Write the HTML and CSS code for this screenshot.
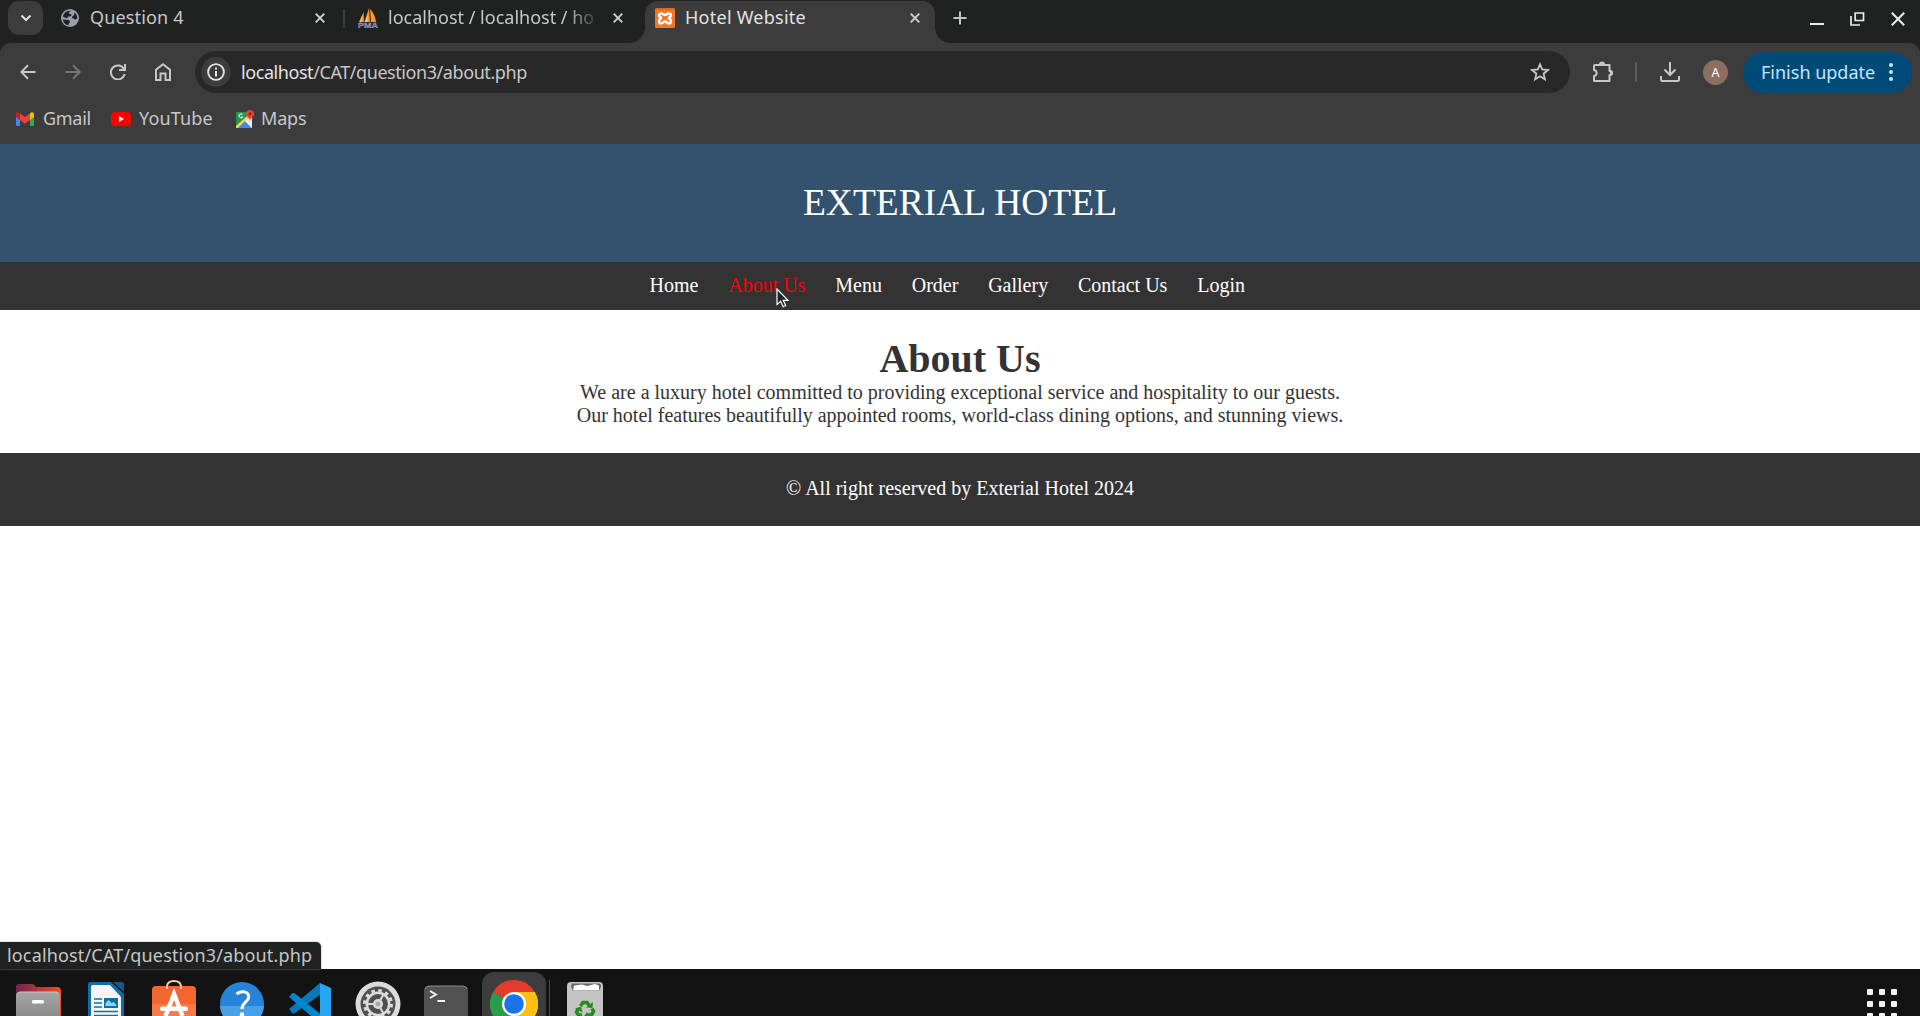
FILE: index.html
```html
<!DOCTYPE html>
<html lang="en">
<head>
<meta charset="utf-8">
<title>Hotel Website</title>
<link rel="stylesheet" href="styles.css">
</head>
<body>
<div class="desktop">
  <div class="tabstrip">
    <div class="tab-search"><svg width="12" height="8" viewBox="0 0 12 8"><path d="M1.500 1.500 6 6l4.500-4.500" fill="none" stroke="#e3e3e3" stroke-width="2"/></svg></div>
    <div class="tab tab-first">
      <svg class="favicon" width="18" height="18" viewBox="0 0 18 18"><circle cx="9" cy="9" r="9" fill="#9aa0ab"/><path d="M10 1.800C8 3 7.500 3.500 8 4.500c.5.800 2.500.2 2.500 1.500S9 7.500 7.500 7.500 7 9.500 6 9.500L1.800 7.500A7.300 7.300 0 0 1 10 1.800z" fill="#202222"/><path d="M1.800 10.500l5 .5c2 0 2.500 1 2 2.500-.3 1-1.300.5-1.300 2v.9A7.500 7.500 0 0 1 1.800 10.500zM16.300 9.500c-1.300 1.300-2.800 1-3.300.5-1-1-2-.5-2-1.700 0-1.300 2.500-.8 2.300-4.800a7.300 7.300 0 0 1 3 6z" fill="#202222"/></svg>
      <span class="title t-question">Question 4</span>
      <svg class="close" width="10" height="10" viewBox="0 0 10 10"><path d="M.7.7l8.600 8.600M9.300.7.7 9.300"/></svg>
    </div>
    <div class="tab-divider"></div>
    <div class="tab tab-second">
      <svg class="favicon" width="20" height="20" viewBox="0 0 20 20"><path d="M5.500 4 1 14h5zM11 0 6.500 14H12zM12 1q5 5 6 13h-5z" fill="#f79a2c"/><path d="M10 6 7 14h2zM4 8l-2 6h1z" fill="#ffd08a"/><text x="0" y="19.500" class="pma" textLength="20" lengthAdjust="spacingAndGlyphs">PMA</text></svg>
      <span class="title t-local">localhost / localhost / ho</span>
      <svg class="close" width="10" height="10" viewBox="0 0 10 10"><path d="M.7.7l8.600 8.600M9.300.7.7 9.300"/></svg>
    </div>
    <div class="tab tab-active">
      <svg class="favicon" width="20" height="20" viewBox="0 0 20 20"><rect width="20" height="20" rx="1.500" fill="#f37623"/><path d="M1 1h18" stroke="#c95a12"/><path d="M7 10C3.500 9.500 3.200 5.500 6 5.500c2 0 2.500 1.500 4 1.500s2-1.500 4-1.500c2.800 0 2.500 4-1 4.500 3.500.5 3.800 5.500 1 5.500-2 0-2.500-2-4-2s-2 2-4 2c-2.800 0-2.500-5 1-5.500z" fill="none" stroke="#fff" stroke-width="2.500"/></svg>
      <span class="title t-hotel">Hotel Website</span>
      <svg class="close bright" width="10" height="10" viewBox="0 0 10 10"><path d="M.7.7l8.600 8.600M9.300.7.7 9.300"/></svg>
    </div>
    <svg class="new-tab" width="14" height="14" viewBox="0 0 14 14"><path d="M7 .5v13M.5 7h13" stroke="#c7c7c7" stroke-width="2"/></svg>
    <div class="window-controls">
      <svg width="14" height="14" viewBox="0 0 14 14"><path d="M0 12h14" stroke="#ececec" stroke-width="2"/></svg>
      <svg width="15" height="14" viewBox="0 0 15 14"><path d="M5.200 1h8.300v7.500H5.200zM1 4v9h9" fill="none" stroke="#ececec" stroke-width="1.700"/></svg>
      <svg width="14" height="14" viewBox="0 0 14 14"><path d="M.8.8l12.400 12.400M13.200.8.8 13.200" stroke="#ececec" stroke-width="2"/></svg>
    </div>
  </div>

  <div class="browser-bars">
    <div class="toolbar">
      <div class="nav-buttons">
        <svg width="16" height="16" viewBox="0 0 16 16"><path d="M15.500 8H1.800M8 1.300 1.300 8 8 14.700"/></svg>
        <svg class="dim" width="16" height="16" viewBox="0 0 16 16"><path d="M.5 8h13.700M8 1.300 14.700 8 8 14.700"/></svg>
        <svg width="16" height="16" viewBox="0 0 16 16"><path d="M14 5A7 7 0 1 0 14.700 10M15 0v6H9"/></svg>
        <svg class="home" width="18" height="18" viewBox="0 0 18 18"><path d="M2 17V6.800L9 1.300l7 5.500V17h-4.500v-6.500h-5V17z"/></svg>
      </div>
      <div class="address">
        <div class="info"><svg width="18" height="18" viewBox="0 0 18 18"><circle cx="9" cy="9" r="7.900" fill="none" stroke="#e3e3e3" stroke-width="1.900"/><path d="M9 4.500v2M9 8v5.500" stroke="#e3e3e3" stroke-width="2"/></svg></div>
        <div class="url"><b>localhost</b>/CAT/question3/about.php</div>
        <svg class="star" width="20" height="20" viewBox="0 0 20 20"><path d="M10 2.200l2.200 5.300 5.700.5-4.300 3.700 1.300 5.600L10 14.300l-4.900 3 1.300-5.600L2.100 8l5.700-.5z" fill="none" stroke="#c7c7c7" stroke-width="1.800"/></svg>
      </div>
      <div class="actions">
        <svg width="22" height="22" viewBox="0 0 22 22"><path d="M3 4h14.500v6c3 0 3 4 0 4v6H2v-5c3.500-.5 3.500-5.500 0-6V5q0-1 1-1z" fill="none" stroke="#c7c7c7" stroke-width="2" stroke-linejoin="round"/><path d="M7 3.500a3 3 0 0 1 6 0zM18 9a3 3 0 0 1 0 6z" fill="#c7c7c7"/></svg>
        <span class="action-divider"></span>
        <svg width="20" height="20" viewBox="0 0 20 20"><path d="M10 0v13M4.500 7.500 10 13l5.500-5.500M1 14v3.500q0 1.500 1.500 1.500h15q1.500 0 1.500-1.500V14" fill="none" stroke="#c7c7c7" stroke-width="2"/></svg>
        <span class="avatar">A</span>
        <div class="update"><span>Finish update</span><svg width="4" height="18" viewBox="0 0 4 18"><g fill="#c2e7ff"><circle cx="2" cy="2" r="2"/><circle cx="2" cy="9" r="2"/><circle cx="2" cy="16" r="2"/></g></svg></div>
      </div>
    </div>
    <div class="bookmarks">
      <div class="bookmark b-gmail"><svg width="18" height="14" viewBox="0 0 18 14"><path d="M0 3h4v11H1.200Q0 14 0 12.800z" fill="#4285f4"/><path d="M14 3h4v9.800q0 1.200-1.200 1.200H14z" fill="#34a853"/><path d="M14 1.200C16 -.5 18 .2 18 2.200V5l-4 3z" fill="#fbbc04"/><path d="M0 2.200C0 .2 2 -.5 4 1.200V8L0 5z" fill="#c5221f"/><path d="M4 1.200l5 3.800 5-3.800V8l-5 3.800L4 8z" fill="#ea4335"/></svg><span>Gmail</span></div>
      <div class="bookmark b-youtube"><svg width="20" height="14" viewBox="0 0 20 14"><rect width="20" height="14" rx="3.500" fill="#f00"/><path d="M8 4v6l5-3z" fill="#fff"/></svg><span>YouTube</span></div>
      <div class="bookmark b-maps"><svg width="18" height="18" viewBox="0 0 18 18"><path d="M0 2h16v16H0z" fill="#e8eaed"/><path d="M0 2h11l2 5-13 11z" fill="#219653"/><path d="M0 16 11 6l2 3L3 18H0z" fill="#ffd23f"/><path d="M2 18l7-7 7 7z" fill="#4285f4"/><path d="M9 11l2-2 5 5v4z" fill="#eee"/><path d="M6.500 4.500A2 2 0 1 0 6.700 7H5" fill="none" stroke="#fff"/><path d="M14 11c0-3-4-4-4-7a4 4 0 0 1 8 0c0 3-4 4-4 7z" fill="#ea4335"/><circle cx="14" cy="4" r="1.400" fill="#8c1b13"/></svg><span>Maps</span></div>
    </div>
  </div>

  <div class="page">
    <header class="site-header">EXTERIAL HOTEL</header>
    <nav class="site-nav"><a>Home</a><a class="hovered">About Us</a><a>Menu</a><a>Order</a><a>Gallery</a><a>Contact Us</a><a>Login</a></nav>
    <main class="about">
      <h1>About Us</h1>
      <p>We are a luxury hotel committed to providing exceptional service and hospitality to our guests.</p>
      <p>Our hotel features beautifully appointed rooms, world-class dining options, and stunning views.</p>
    </main>
    <footer class="site-footer">© All right reserved by Exterial Hotel 2024</footer>
    <div class="status"><span>localhost/CAT/question3/about.php</span></div>
    <svg class="cursor" width="14" height="20" viewBox="0 0 14 20"><path d="M1 1v15.500l3.600-3.300 2.600 5.500 2.500-1.200-2.500-5.200H12z" fill="#222" stroke="#fff" stroke-width="1.200"/></svg>
  </div>

  <div class="dock">
    <div class="app"><svg width="48" height="36" viewBox="0 0 48 36"><defs><linearGradient id="folder"><stop stop-color="#77214f"/><stop offset="1" stop-color="#e95420"/></linearGradient><linearGradient id="steel" x2="0" y2="1"><stop stop-color="#a5a5a5"/><stop offset="1" stop-color="#8b8b8b"/></linearGradient></defs><path d="M2 36V7q0-3 3-3h13q2 0 3 2l1 1h21q4 0 4 4v25z" fill="url(#folder)"/><path d="M2 36V16q0-4 4-4h36q4 0 4 4v20z" fill="url(#steel)"/><path d="M3 14q1-2 3-2h36q2 0 3 2" fill="none" stroke="#c4c4c4"/><rect x="18" y="20" width="12" height="3.500" rx="1.500" fill="#fff"/></svg></div>
    <div class="app"><svg width="48" height="36" viewBox="0 0 48 36"><path d="M6 36V5q0-3 3-3h20l13 12v22z" fill="#0e6fa8"/><path d="M9 36V7q0-2 2-2h17l11 12v19z" fill="#f5f5f5"/><path d="M31 2h8q3 0 3 3v7z" fill="#0d5f91"/><path d="M12 19h8M12 23h8M12 27h8M12 31.500h24M12 35.500h24" stroke="#0e6fa8" stroke-width="1.700"/><path d="M22 18h14v10H22z" fill="#0e6fa8"/><path d="M23.500 26v-3l3-3 3 3 2-1 3 3v1z" fill="#8ed4f2"/></svg></div>
    <div class="app"><svg width="48" height="36" viewBox="0 0 48 36"><path d="M2 36V10q0-4 4-4h36q4 0 4 4v26z" fill="#f4662f"/><path d="M2 24h44v12H2z" fill="#f77b49"/><path d="M17 9V7q0-6 7-6t7 6v2" fill="none" stroke="#f3cda0" stroke-width="2"/><path d="M15.500 36 24 14l8.500 22" fill="none" stroke="#fff" stroke-width="4.500"/><rect x="10" y="26.500" width="28" height="4.500" rx="2.200" fill="#fff"/></svg></div>
    <div class="app"><svg width="48" height="36" viewBox="0 0 48 36"><circle cx="24" cy="24" r="22" fill="#2583da"/><path d="M2 26h44q0 5-3 10H5q-3-5-3-10z" fill="#4aa0e6"/><path d="M18.500 14q3-2.200 6.500-2.200c3.500 0 5.700 2 5.700 5 0 5.200-6.700 5.200-6.700 12.200" fill="none" stroke="#fff" stroke-width="3"/><circle cx="24" cy="34.500" r="2.300" fill="#fff"/></svg></div>
    <div class="app"><svg width="48" height="36" viewBox="0 0 48 36"><path d="M34 3 3 29l3 4q1 1 3 0L35 14z" fill="#0878bd"/><path d="M3 17l3-3.500q1-1 3 0l28 22.500H25z" fill="#0684ce"/><path d="M34 3l11 5v28H34z" fill="#27a7f2"/></svg></div>
    <div class="app"><svg width="48" height="36" viewBox="0 0 48 36"><circle cx="24" cy="24" r="22.500" fill="#dcdcdc"/><circle cx="24" cy="24" r="17.500" fill="#505050"/><circle cx="24" cy="24" r="13.500" fill="none" stroke="#dcdcdc" stroke-width="3" stroke-dasharray="3.530 3.530"/><circle cx="24" cy="24" r="11.200" fill="none" stroke="#dcdcdc" stroke-width="2.500"/><circle cx="24" cy="24" r="5" fill="#dcdcdc"/><path d="M24 24H13M24 24l5.500-9.500M24 24l5.500 9.500" stroke="#dcdcdc" stroke-width="2"/><circle cx="24" cy="24" r="2.500" fill="#aaa"/></svg></div>
    <div class="app"><svg width="48" height="36" viewBox="0 0 48 36"><path d="M2 36V11q0-5 5-5h34q5 0 5 5v25z" fill="#525252"/><path d="M3 9q1-3 4-3h34q3 0 4 3" fill="none" stroke="#888"/><path d="M8 11l6 3.500L8 18M15.500 21H23" fill="none" stroke="#fff" stroke-width="1.800"/></svg></div>
    <div class="app running"><svg width="48" height="36" viewBox="0 0 48 36"><path d="M24 24 3.200 12A24 24 0 0 1 44.800 12z" fill="#e33b2e"/><path d="M24 24V12h20.800A24 24 0 0 1 45 36H24z" fill="#fcc014"/><path d="M24 24 3.200 12A24 24 0 0 0 3.200 36H24z" fill="#2a9d4b"/><circle cx="24" cy="24" r="12" fill="#fff"/><circle cx="24" cy="24" r="9.800" fill="#1a73e8"/></svg></div>
    <div class="dock-divider"></div>
    <div class="app"><svg width="48" height="36" viewBox="0 0 48 36"><path d="M6 36V6q0-4 4-4h28q4 0 4 4v30z" fill="#c4c4c4"/><path d="M11 3.500h27q2 0 2 3L38 11H12l-2-4.500z" fill="#666"/><path d="M12 10.500l1-5 8-1 5 1.500 8-2 4 1.500v5z" fill="#fff"/><g fill="none" stroke="#288a22" stroke-width="3.600"><path d="M19.500 26l2.500-3.500h4l2.500 3.500"/><path d="M31 28.500l1.500 3-2 3.500H26M17 29.500 15.500 32l2 3H21"/></g><path d="M25 27.500l6.500.5.500-6zM14 28.500l6-2 1.500 6zM26.500 31.500V36H23z" fill="#288a22"/></svg></div>
    <div class="app-grid"><i></i><i></i><i></i><i></i><i></i><i></i><i></i><i></i><i></i></div>
  </div>
</div>
</body>
</html>
```
FILE: styles.css
```css
* { box-sizing: border-box; }
body { margin: 0; font-family: "Noto Sans", sans-serif; font-size: 18px; }
svg { display: block; flex: none; }
.desktop { width: 1920px; height: 1016px; display: flex; flex-direction: column; overflow: hidden; background: #202222; }

.tabstrip { height: 43px; display: flex; align-items: flex-start; background: #202222; color: #c7c7c7; line-height: 34px; }
.tab-search { width: 35px; height: 34px; margin: 1px 0 0 8px; border-radius: 11px; background: #3c3c3c; display: flex; align-items: center; justify-content: center; }
.tab { height: 36px; display: flex; align-items: center; white-space: nowrap; }
.tab .title { height: 36px; margin-left: 10px; overflow: hidden; }
.tab .t-question { margin-left: 11px; letter-spacing: .15px; }
.tab .t-hotel { letter-spacing: .25px; }
.tab .close { margin-left: auto; fill: none; stroke: #d0d0d0; stroke-width: 1.9; }
.tab-first { width: 282px; margin-left: 18px; padding-right: 18px; }
.tab-divider { width: 2px; height: 19px; margin-top: 9px; background: #3c3c3c; }
.tab-second { width: 265px; margin-left: 13px; }
.tab-second .title { width: 208px; -webkit-mask-image: linear-gradient(to right, #000 178px, transparent 212px); mask-image: linear-gradient(to right, #000 178px, transparent 212px); }
.pma { font: bold 8px "Liberation Sans", sans-serif; fill: #55558f; stroke: #c8c8e8; stroke-width: .3px; }
.tab-active { position: relative; width: 290px; height: 42px; margin: 1px 0 0 22px; padding: 0 15px 8px 10px; border-radius: 13px 13px 0 0; background: #3c3c3c; color: #e3e3e3; }
.tab-active .title { height: 34px; line-height: 32px; }
.tab-active::before, .tab-active::after { content: ""; position: absolute; bottom: 0; width: 15px; height: 15px; }
.tab-active::before { left: -15px; background: radial-gradient(circle at 0 0, transparent 14.5px, #3c3c3c 15px); }
.tab-active::after { right: -15px; background: radial-gradient(circle at 100% 0, transparent 14.5px, #3c3c3c 15px); }
.new-tab { margin: 11px 0 0 18px; }
.window-controls { display: flex; gap: 26px; margin: 12px 15.500px 0 auto; }

.browser-bars { height: 101px; background: #3c3c3c; border-radius: 11px 11px 0 0; color: #c7c7c7; }
.toolbar { height: 58px; padding: 8px 8px 0 20px; display: flex; align-items: flex-start; }
.nav-buttons { width: 175px; height: 42px; display: flex; align-items: center; gap: 29px; fill: none; stroke: #c7c7c7; stroke-width: 2; }
.nav-buttons .dim { stroke: #777; }
.nav-buttons .home { margin-left: -1px; }
.address { width: 1375px; height: 42px; border-radius: 21px; background: #282828; display: flex; align-items: center; padding: 0 20px 0 6px; }
.info { width: 30px; height: 30px; border-radius: 50%; background: #3c3c3c; display: flex; align-items: center; justify-content: center; }
.url { margin-left: 10px; letter-spacing: -.43px; }
.url b { font-weight: 400; color: #e3e3e3; }
.star { margin-left: auto; }
.actions { flex: 1; height: 42px; display: flex; align-items: center; padding-left: 22px; }
.action-divider { width: 2px; height: 20px; margin: 0 23px 0 21px; background: #5c5c5c; }
.avatar { width: 25px; height: 25px; margin: 0 15px 0 23px; border-radius: 50%; background: #8d6e63; color: #fff; font-size: 12.500px; line-height: 25px; text-align: center; }
.update { width: 169px; height: 41px; border-radius: 21px; background: #004a77; color: #c2e7ff; display: flex; align-items: center; justify-content: space-between; padding: 0 19px 0 18px; white-space: nowrap; }
.bookmarks { display: flex; height: 36px; padding-left: 16px; }
.bookmark { display: flex; align-items: center; }
.bookmark span { margin-bottom: 2px; }
.b-gmail { width: 95px; gap: 9px; letter-spacing: -.3px; }
.b-youtube { width: 125px; gap: 8px; letter-spacing: .15px; }
.b-maps { gap: 7px; letter-spacing: -.2px; }

.page { position: relative; height: 825px; background: #fff; font-family: "Liberation Serif", "Times New Roman", serif; font-size: 20px; line-height: 23px; text-align: center; }
.site-header { height: 118px; background: #32526e; color: #fff; font-size: 37.500px; line-height: 118px; }
.site-nav { height: 48px; background: #333; color: #fff; display: flex; justify-content: center; align-items: center; gap: 29.800px; padding: 0 25.500px 2px 0; }
.site-nav .hovered { color: #f80008; }
.about { height: 143px; padding-top: 26px; color: #333; }
.about h1 { margin: 0 0 -1px; font-size: 40px; line-height: 46px; }
.about p { margin: 0; }
.site-footer { height: 73px; background: #333; color: #fff; line-height: 71px; }
.status { position: absolute; left: 0; bottom: 0; width: 321px; height: 27px; padding-left: 7px; background: #202222; border-radius: 0 5px 0 0; color: #c7c7c7; font: 18px/27px "Noto Sans", sans-serif; letter-spacing: .16px; text-align: left; white-space: nowrap; box-shadow: 0 0 2px #999; }
.cursor { position: absolute; left: 776px; top: 144px; }

.dock { height: 47px; display: flex; background: #131313; padding-left: 4px; overflow: hidden; }
.app { width: 68px; padding: 11px 10px 0; }
.running { width: 64px; margin: 3px 2px 0; padding: 8px 8px 0; background: #3d3d3d; border-radius: 12px 12px 0 0; }
.dock-divider { width: 1px; height: 36px; margin: 11px 1px 0; background: #494949; }
.app-grid { display: grid; grid-template-columns: repeat(3, 6px); grid-auto-rows: 6px; gap: 6px; margin: 20px 23px 0 auto; }
.app-grid i { background: #f2f2f2; border-radius: 1px; }
```
